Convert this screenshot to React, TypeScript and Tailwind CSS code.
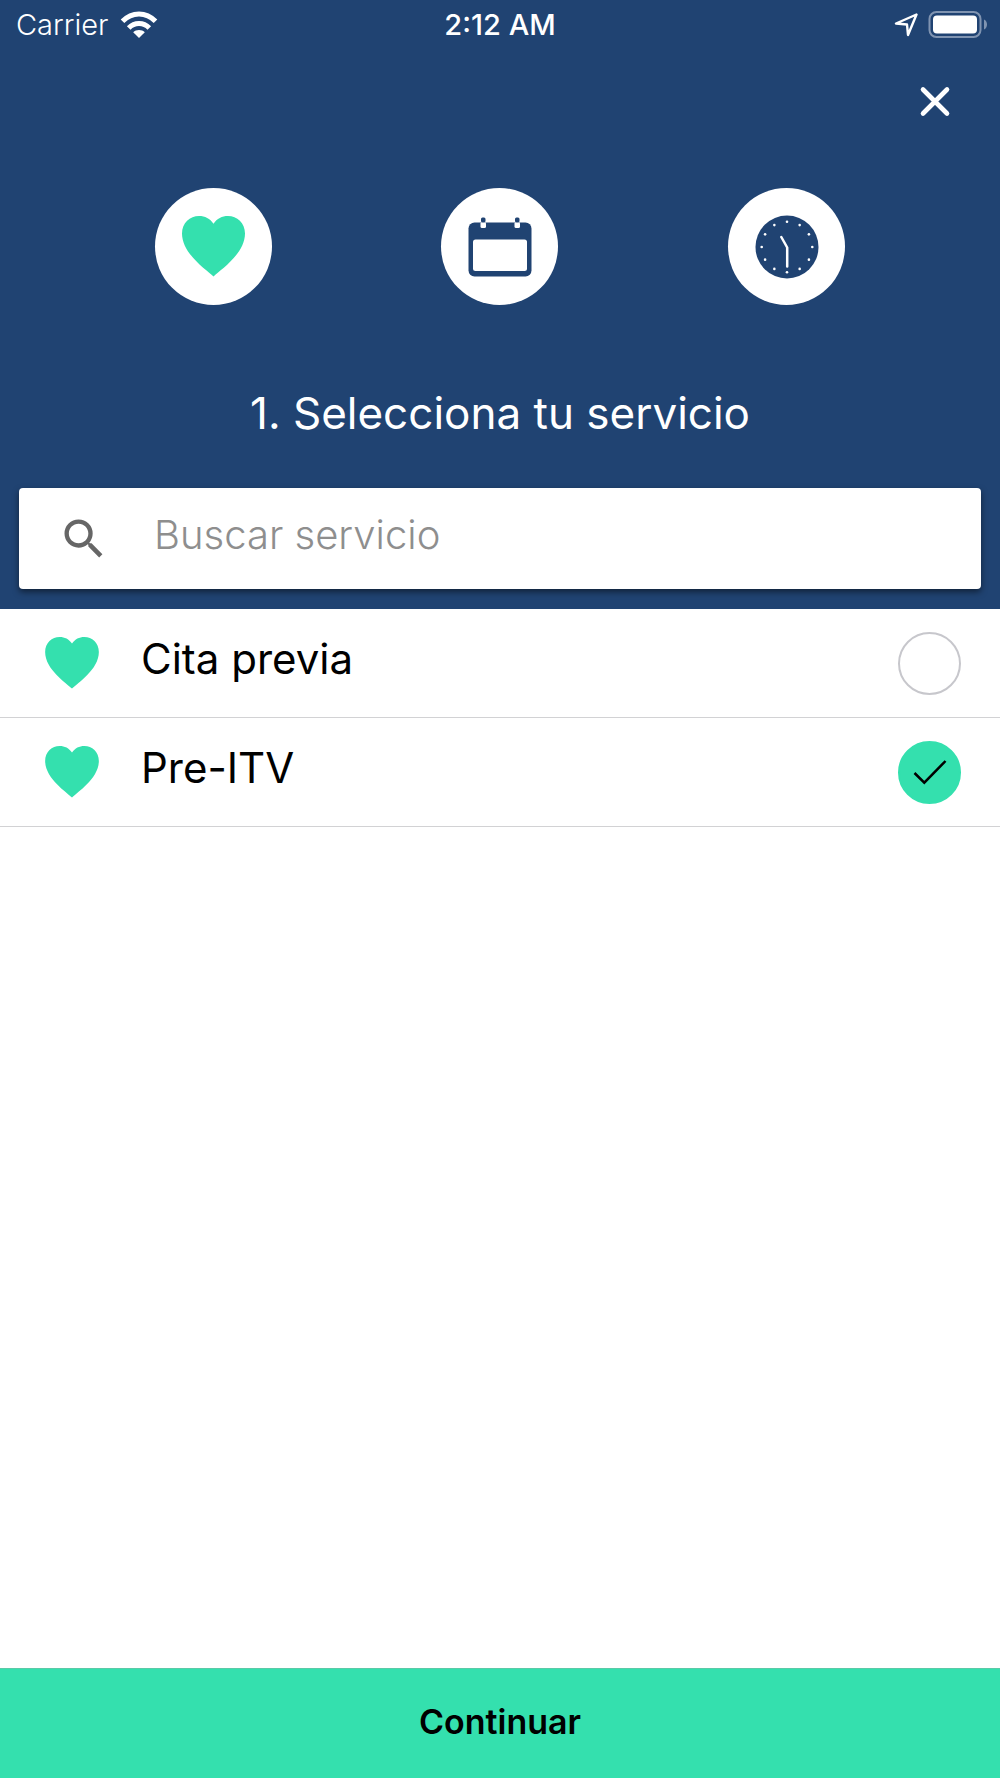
import { useState } from 'react'

const services = [
    { id: 'cita-previa', name: 'Cita previa' },
    { id: 'pre-itv', name: 'Pre-ITV' },
]

function HeartIcon({ className }: { className: string }) {
    return (
        <svg viewBox="0 0 63 61" className={className} fill="#34e0ae" aria-hidden="true">
            <path d="M31.5 60.5C25 54 0 38 0 17.5C0 7 8 0 17 0C23 0 28 2.5 31.5 7.7C35 2.5 40 0 46 0C55 0 63 7 63 17.5C63 38 38 54 31.5 60.5Z" />
        </svg>
    )
}

function CalendarIcon() {
    return (
        <svg viewBox="0 0 64 60" className="w-16 h-[60px]" aria-hidden="true">
            <rect x="0.5" y="5.500" width="63" height="54" rx="6" fill="#204372" />
            <rect x="5" y="22.500" width="54" height="31.500" rx="2.500" fill="#fff" />
            {[15, 49].map((x) => (
                <g key={x}>
                    <rect x={x - 2.5} y="5" width="5.500" height="6" rx="1.500" fill="#fff" />
                    <rect x={x - 2} y="0.5" width="4.500" height="5" rx="1.500" fill="#204372" />
                </g>
            ))}
        </svg>
    )
}

function ClockIcon() {
    const hours = Array.from({ length: 12 }, (_, i) => (i * Math.PI) / 6)

    return (
        <svg viewBox="0 0 64 64" className="size-16" aria-hidden="true">
            <circle cx="32" cy="32" r="31.500" fill="#204372" />
            {hours.map((angle) => (
                <circle
                    key={angle}
                    cx={32 + 25.3 * Math.sin(angle)}
                    cy={32 - 25.3 * Math.cos(angle)}
                    r="1.300"
                    fill="#fff"
                />
            ))}
            <path d="M26.300 22L32.200 32.500V51.500" fill="none" stroke="#fff" strokeWidth="2.500" strokeLinecap="round" strokeLinejoin="round" />
        </svg>
    )
}

function StatusBar() {
    return (
        <div className="grid grid-cols-3 items-center h-[50px] px-3 text-[29px] leading-8 text-white">
            <div className="flex items-center gap-3 pl-1 font-light">
                <span>Carrier</span>
                <svg viewBox="0 0 38 28" className="w-[38px] h-7" fill="none" stroke="#fff" strokeWidth="5" aria-hidden="true">
                    <path d="M2.500 10.300C12 0.500 26 0.500 35.500 10.300" />
                    <path d="M8.700 17C14.500 11 23.500 11 29.300 17" />
                    <path d="M19 27L13.200 21.200C16 18.200 22 18.200 24.800 21.200Z" fill="#fff" stroke="none" />
                </svg>
            </div>
            <span className="text-center font-medium">2:12 AM</span>
            <div className="flex items-center justify-end gap-2.5">
                <svg viewBox="0 0 24 24" className="size-6" fill="none" stroke="#fff" strokeWidth="2.400" strokeLinejoin="round" aria-hidden="true">
                    <path d="M22.500 1.500L2 10.500L13 11.500L14 22Z" />
                </svg>
                <svg viewBox="0 0 60 28" className="w-[60px] h-7" aria-hidden="true">
                    <rect x="1.500" y="1" width="51" height="25" rx="7" fill="none" stroke="#8094b1" strokeWidth="2" />
                    <rect x="5" y="4.500" width="44" height="18" rx="4" fill="#fff" />
                    <path d="M56 8.500C60 10 60 17 56 18.500Z" fill="#8094b1" />
                </svg>
            </div>
        </div>
    )
}

export default function App() {
    const [selected, setSelected] = useState('pre-itv')
    const [search, setSearch] = useState('')

    const visible = services.filter((s) => s.name.toLowerCase().includes(search.toLowerCase()))

    return (
        <main className="flex flex-col min-h-screen bg-white font-[Inter,'Liberation_Sans',sans-serif]">
            <header className="flex flex-col bg-[#204372]">
                <StatusBar />
                <div className="flex justify-end pt-7 pr-[41px]">
                    <button type="button" aria-label="Cerrar" className="p-2">
                        <svg viewBox="0 0 32 32" className="size-8" stroke="#fff" strokeWidth="4.600" strokeLinecap="round" aria-hidden="true">
                            <path d="M4 3.500L28 27.500M28 3.500L4 27.500" />
                        </svg>
                    </button>
                </div>
                <div className="grid grid-cols-3 place-items-center px-[70px] pt-[62px]">
                    <div className="flex items-center justify-center size-[117px] rounded-full bg-white">
                        <HeartIcon className="w-[63px] h-[61px]" />
                    </div>
                    <div className="flex items-center justify-center size-[117px] rounded-full bg-white">
                        <CalendarIcon />
                    </div>
                    <div className="flex items-center justify-center size-[117px] rounded-full bg-white">
                        <ClockIcon />
                    </div>
                </div>
                <h1 className="pt-[84px] text-center text-[44px] leading-12 text-white">1. Selecciona tu servicio</h1>
                <div className="px-[19px] pt-[51px] pb-5">
                    <label className="flex items-center gap-11 h-[101px] pl-[39px] pr-6 rounded-[4px] bg-white shadow-[0_3px_6px_rgba(0,0,0,0.5)]">
                        <svg viewBox="0 0 24 24" className="size-[52px] shrink-0" fill="#666" aria-hidden="true">
                            <path d="M15.5 14h-.79l-.28-.27A6.471 6.471 0 0 0 16 9.5 6.5 6.5 0 1 0 9.5 16c1.61 0 3.09-.59 4.23-1.57l.27.28v.79l5 4.99L20.49 19l-4.99-5zm-6 0C7.01 14 5 11.99 5 9.5S7.01 5 9.5 5 14 7.01 14 9.5 11.99 14 9.5 14z" />
                        </svg>
                        <input
                            type="text"
                            aria-label="Buscar servicio"
                            placeholder="Buscar servicio"
                            value={search}
                            onChange={(e) => setSearch(e.target.value)}
                            className="flex-1 min-w-0 pb-2 text-[40px] leading-12 font-light outline-none placeholder:text-[#8e8e8e]"
                        />
                    </label>
                </div>
            </header>
            <ul className="flex flex-col flex-1">
                {visible.map((service) => (
                    <li key={service.id} className="border-b border-[#d2d2d4]">
                        <label className="flex items-center h-[108px] pl-[45px] pr-[39px]">
                            <HeartIcon className="w-[54px] h-[52px]" />
                            <span className="flex-1 pl-[42px] pb-2 text-[42px] leading-12 font-normal text-black">
                                {service.name}
                            </span>
                            <span className="relative size-[63px]">
                                <input
                                    type="radio"
                                    name="service"
                                    checked={selected === service.id}
                                    onChange={() => setSelected(service.id)}
                                    className="block size-full appearance-none rounded-full border-2 border-[#c7c7cc] checked:border-[#34e0ae] checked:bg-[#34e0ae]"
                                />
                                {selected === service.id && (
                                    <svg viewBox="0 0 63 63" className="absolute inset-0 pointer-events-none" fill="none" stroke="#000" strokeWidth="2.500" aria-hidden="true">
                                        <path d="M16.5 32L26.3 41.7L47.5 20" />
                                    </svg>
                                )}
                            </span>
                        </label>
                    </li>
                ))}
            </ul>
            <button type="button" className="h-[110px] pb-1 border-t border-[#5cc9a7] bg-[#34e0ae] text-[34px] leading-10 font-semibold text-black">
                Continuar
            </button>
        </main>
    )
}
